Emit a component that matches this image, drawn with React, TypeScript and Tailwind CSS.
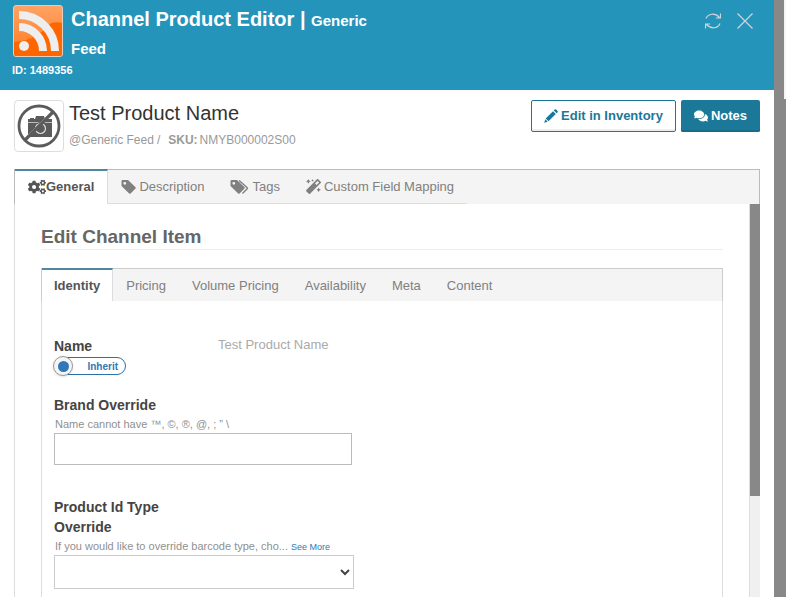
import { useState } from "react";
import { FaCogs, FaComments, FaMagic } from "react-icons/fa";

const mainTabs = ["General", "Description", "Tags", "Custom Field Mapping"];
const itemTabs = ["Identity", "Pricing", "Volume Pricing", "Availability", "Meta", "Content"];

function FeedLogo() {
  return (
    <svg viewBox="0 0 50 52" className="h-[52px] w-[50px] shrink-0" aria-hidden="true">
      <defs>
        <linearGradient id="feedBg" x1="0" y1="0" x2="0" y2="1">
          <stop offset="0" stopColor="#ffa366" />
          <stop offset="1" stopColor="#ff7a1c" />
        </linearGradient>
      </defs>
      <rect x="0.5" y="0.5" width="49" height="51" rx="2.5" fill="url(#feedBg)" stroke="#e3cdbd" />
      <path d="M1 37C18 36 31 27 38 18c4-1 8-1 11 0v31a2 2 0 0 1-2 2H3a2 2 0 0 1-2-2z" fill="#ff6600" />
      <circle cx="11" cy="41" r="5" fill="#eee" />
      <path d="M6 22A24 24 0 0 1 30 46" fill="none" stroke="#eee" strokeWidth="8" />
      <path d="M6 10A36 36 0 0 1 42 46" fill="none" stroke="#eee" strokeWidth="8" />
    </svg>
  );
}

function NoImage() {
  return (
    <svg viewBox="0 0 44 44" className="h-11 w-11" aria-hidden="true">
      <path d="M11 15h2v-1h4v1h1l1-3h8l1 3h7v18H11z" fill="#5b5b5b" />
      <path d="M11 18.500h24" stroke="#fff" strokeWidth="0.600" />
      <circle cx="23.500" cy="24.500" r="6.500" fill="#5b5b5b" />
      <circle cx="23.500" cy="24.500" r="5" fill="none" stroke="#ddd" strokeWidth="1.200" />
      <path d="M7 35L35 7" stroke="#fff" strokeWidth="1" />
      <circle cx="22" cy="22" r="20" fill="none" stroke="#5b5b5b" strokeWidth="2.800" />
      <path d="M8 36L36 8" stroke="#5b5b5b" strokeWidth="3.200" />
    </svg>
  );
}

function PencilIcon() {
  return (
    <svg viewBox="0 0 14 14" className="size-[14px]" fill="currentColor" aria-hidden="true">
      <path d="M10.600.6q.8-.8 1.600 0l1.200 1.200q.8.8 0 1.600l-.8.8-2.800-2.800zM9 2.200L11.800 5l-7.300 7.300-2.800-2.800zM1.300 10.300l2.400 2.400L.2 13.800z" />
    </svg>
  );
}

function TagIcon() {
  return (
    <svg viewBox="0 0 15 14" className="h-[14px] w-[15px]" aria-hidden="true">
      <path
        fillRule="evenodd"
        fill="currentColor"
        d="M1.500 0H7l7.500 7.200q.7.7 0 1.400L9.600 13.500q-.7.6-1.400 0L.5 6V1.200Q.5 0 1.500 0zM3.800 1.900a1.400 1.400 0 1 0 0 2.800 1.400 1.400 0 0 0 0-2.800z"
      />
    </svg>
  );
}

function TagsIcon() {
  return (
    <svg viewBox="0 0 19 14" className="h-[14px] w-[19px]" aria-hidden="true">
      <path
        fillRule="evenodd"
        fill="currentColor"
        d="M1.500 0H7l7.500 7.200q.7.7 0 1.400L9.600 13.500q-.7.6-1.400 0L.5 6V1.200Q.5 0 1.500 0zM3.800 1.900a1.400 1.400 0 1 0 0 2.800 1.400 1.400 0 0 0 0-2.800z"
      />
      <path d="M9.200.6l8 7.100q.5.500 0 1L12.500 13.500" fill="none" stroke="currentColor" strokeWidth="1.400" />
    </svg>
  );
}

function tabIcon(tab: string) {
  if (tab === "General") return <FaCogs size={18} />;
  if (tab === "Description") return <TagIcon />;
  if (tab === "Tags") return <TagsIcon />;
  return <FaMagic size={15} />;
}

export default function App() {
  const [mainTab, setMainTab] = useState("General");
  const [itemTab, setItemTab] = useState("Identity");
  const [inherit, setInherit] = useState(true);
  const [brand, setBrand] = useState("");
  const [idType, setIdType] = useState("");

  return (
    <div className="flex h-screen overflow-hidden bg-[#888] font-['Liberation_Sans',Arial,sans-serif] text-[13px] text-[#444]">
      <div className="flex min-w-0 flex-1 flex-col bg-white">
        <header className="h-[90px] shrink-0 bg-[#2494bb] px-3 pt-[5px] text-white">
          <div className="flex items-start">
            <div className="flex flex-1 gap-2 pl-px">
              <FeedLogo />
              <h1 className="max-w-[310px] text-[20px] leading-7 font-bold">
                Channel Product Editor |{" "}
                <span className="text-[15px] leading-none">Generic</span>{" "}
                <span className="text-[15px] leading-none">Feed</span>
              </h1>
            </div>
            <div className="flex gap-4 pt-2 pr-[9px] text-[#d0d5d6]">
              <button aria-label="Refresh">
                <svg viewBox="0 0 16 16" className="size-4" fill="none" stroke="currentColor" strokeWidth="1.200">
                  <path d="M1 5.500C3 .5 10-.5 14.500 4.500M15.500 .5V5H11M15 10.500C13 15.500 6 16.500 1.500 11.500M.5 15.500V11H5" />
                </svg>
              </button>
              <button aria-label="Close">
                <svg viewBox="0 0 16 16" className="size-4" fill="none" stroke="currentColor" strokeWidth="1.200">
                  <path d="M.5.5l15 15M15.500.5l-15 15" />
                </svg>
              </button>
            </div>
          </div>
          <p className="mt-px text-[11px] leading-4 font-bold">ID: 1489356</p>
        </header>

        <main className="flex min-h-0 flex-1 flex-col px-[14px] pt-[10px]">
          <div className="flex items-start">
            <div className="flex h-[52px] w-[50px] items-center justify-center rounded border border-[#ddd]">
              <NoImage />
            </div>
            <div className="flex-1 pl-[5px]">
              <h2 className="text-[20px] leading-[26px] text-[#333]">Test Product Name</h2>
              <p className="mt-1 flex text-[12px] leading-5 text-[#999]">
                <span>@Generic Feed</span>
                <span className="mr-2 ml-[3px]">/</span>
                <b className="mr-[2px]">SKU:</b>
                <span>NMYB000002S00</span>
              </p>
            </div>
            <div className="flex gap-[5px] text-[13px] font-bold">
              <button className="flex h-8 items-center gap-[3px] rounded-xs border border-[#1b7899] px-3 text-[#1b7899] shadow-[inset_0_-2px_0_#eee]">
                <PencilIcon />
                Edit in Inventory
              </button>
              <button className="flex h-8 items-center gap-[3px] rounded-xs bg-[#1b7899] px-[13px] text-white shadow-[inset_0_-2px_0_#176c8b]">
                <FaComments size={14} />
                Notes
              </button>
            </div>
          </div>

          <div role="tablist" className="mt-[17px] flex h-[35px] shrink-0 border border-b-0 border-[#bbb] bg-[#f4f4f4]">
            {mainTabs.map(tab => (
              <button
                key={tab}
                role="tab"
                aria-selected={mainTab === tab}
                onClick={() => setMainTab(tab)}
                className={
                  mainTab === tab
                    ? "-mt-px flex items-center border-t-2 border-r border-t-[#4f87a0] border-r-[#ddd] bg-white px-[13px] pb-[2px] font-bold text-[#555]"
                    : "flex items-center gap-[3px] border-b border-[#ddd] px-[13px] text-[#808080]"
                }
              >
                {tabIcon(tab)}
                {tab}
              </button>
            ))}
          </div>

          <div className="flex min-h-0 flex-1 border-l border-[#ddd]">
            <section className="min-w-0 flex-1 overflow-hidden px-[26px] pt-5">
              <h3 className="border-b border-[#eee] text-[19px] leading-[25px] font-bold text-[#666]">Edit Channel Item</h3>

              <div role="tablist" className="mt-[18px] flex h-[33px] border border-b-0 border-[#ccc] bg-[#f4f4f4]">
                {itemTabs.map(tab => (
                  <button
                    key={tab}
                    role="tab"
                    aria-selected={itemTab === tab}
                    onClick={() => setItemTab(tab)}
                    className={
                      itemTab === tab
                        ? "-mt-px border-t-2 border-r border-t-[#4f87a0] border-r-[#ddd] bg-white px-3 font-bold text-[#555]"
                        : "px-[13px] pt-[2px] text-[#808080]"
                    }
                  >
                    {tab}
                  </button>
                ))}
              </div>

              <div className="h-[400px] border-x border-[#ddd] px-3 pt-[35px]">
                <div className="flex">
                  <div className="w-[164px]">
                    <p className="text-[14px] leading-5 font-bold">Name</p>
                    <label className="relative mt-px flex h-[18px] w-[72px] items-center justify-end rounded-full border border-[#2d6fa8] pr-[7px] text-[10px] font-bold text-[#3178b6]">
                      <input
                        type="checkbox"
                        checked={inherit}
                        onChange={e => setInherit(e.target.checked)}
                        className="peer sr-only"
                      />
                      <span className="absolute -top-[2px] -left-[2px] flex size-5 items-center justify-center rounded-full border border-[#999] bg-[#f5f5f5] shadow">
                        <span className="size-[11px] rounded-full bg-[#3178b6]" />
                      </span>
                      Inherit
                    </label>
                  </div>
                  <p className="leading-[17px] text-[#aaa]">Test Product Name</p>
                </div>

                <div className="mt-5 max-w-[298px]">
                  <label htmlFor="brand" className="block text-[14px] leading-5 font-bold">Brand Override</label>
                  <p className="pl-px text-[11px] leading-[18px] text-[#909090]">Name cannot have ™, ©, ®, @, ; ” \</p>
                  <input
                    id="brand"
                    type="text"
                    value={brand}
                    onChange={e => setBrand(e.target.value)}
                    className="block h-8 w-full border border-[#bbb] px-2"
                  />
                </div>

                <div className="mt-8 max-w-[300px]">
                  <label htmlFor="idType" className="block w-[130px] text-[14px] leading-5 font-bold">
                    Product Id Type Override
                  </label>
                  <p className="flex h-[18px] items-baseline gap-[3px] pl-px text-[11px] leading-[18px] whitespace-nowrap text-[#909090]">
                    <span>If you would like to override barcode type, cho...</span>
                    <a href="#more" className="text-[9px] text-[#3178b6]">See More</a>
                  </p>
                  <select
                    id="idType"
                    value={idType}
                    onChange={e => setIdType(e.target.value)}
                    className="block h-[34px] w-full border border-[#ccc] bg-white"
                  >
                    <option value=""></option>
                    <option value="upc">UPC</option>
                    <option value="ean">EAN</option>
                  </select>
                </div>
              </div>
            </section>
            <div className="w-[11px] border-l border-[#ddd] bg-[#f0f0f0]">
              <div className="h-[292px] bg-[#888]" />
            </div>
          </div>
        </main>
      </div>
      <div className="flex w-3 justify-end">
        <div className="h-[99px] w-[2px] bg-[#f5f5f5]" />
      </div>
    </div>
  );
}
